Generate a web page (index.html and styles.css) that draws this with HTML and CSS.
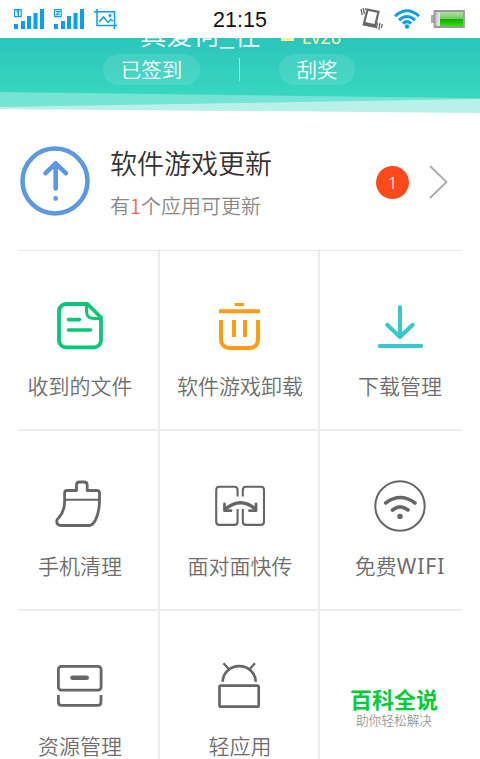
FILE: index.html
```html
<!DOCTYPE html>
<html lang="zh-CN">
<head>
<meta charset="utf-8">
<title>管理</title>
<link rel="stylesheet" href="styles.css">
</head>
<body>
<div class="status">
  <div class="status-left">
    <svg width="30" height="20" viewBox="0 0 30 20" fill="#0a9df0"><path d="M0 15h4v5H0zM7 12h4v8H7zM13 7h4v13h-4zM19.500 4h4v16h-4zM26 0h4v20h-4z"/><path d="M.6.6h6.600v7H.6z" fill="none" stroke="#0a9df0" stroke-width="1.200"/><path d="M2.500 2.500l1.800-.8V7" fill="none" stroke="#0a9df0" stroke-width="1.500"/></svg>
    <svg width="30" height="20" viewBox="0 0 30 20" fill="#0a9df0"><path d="M0 15h4v5H0zM7 12h4v8H7zM13 7h4v13h-4zM19.500 4h4v16h-4zM26 0h4v20h-4z"/><path d="M.6.6h6.600v7H.6z" fill="none" stroke="#0a9df0" stroke-width="1.200"/><path d="M2 2.500h3.600L2.200 5.800H6" fill="none" stroke="#0a9df0" stroke-width="1.100"/></svg>
    <svg width="24" height="20" viewBox="0 0 24 20" fill="none" stroke="#0a9df0" stroke-width="1.500"><path d="M0 2.700h20.500V20M3 0v16.500h20"/><path d="M5 13l4.500-5 4.500 5.500 3-3 2 1.500"/><circle cx="16" cy="6.500" r="1.500" fill="#0a9df0" stroke="none"/></svg>
  </div>
  <div class="clock">21:15</div>
  <div class="status-right">
    <svg width="23" height="24" viewBox="0 0 23 24" fill="none" stroke="#696969"><path d="M7.500 2.700L18.500 4.800l-3.600 15-11.200-2.400z" stroke-width="2.200"/><path d="M4 16.500l11.200 2.400" stroke-width="3.400"/><path d="M1 2l1.200 6M3.200 1l1.200 6M5.500 1L6 3M17.600 15.500l-1.300 6M20 16l-1.200 7M22.300 17l-1 4" stroke-width="1.300"/></svg>
    <svg class="net" width="26" height="20" viewBox="0 0 26 20" fill="none" stroke="#0a9df0" stroke-width="3"><path d="M1 7.200Q13-3.600 25 7.200M5 11.200q8-7.400 16 0M9 14.600q4-3.800 8 0" /><circle cx="13" cy="17.500" r="2.200" fill="#0a9df0" stroke="none"/></svg>
    <svg width="34" height="18" viewBox="0 0 34 18"><defs><linearGradient id="cell" x2="0" y2="1"><stop stop-color="#a9e3a0"/><stop offset=".5" stop-color="#6cc95e"/><stop offset=".52" stop-color="#0fae00"/><stop offset="1" stop-color="#2fe000"/></linearGradient><linearGradient id="shell" x2="1" y2="0"><stop stop-color="#bbb"/><stop offset=".2" stop-color="#eee"/></linearGradient></defs><path d="M0 5h3v8H0z" fill="#aaa"/><path d="M3.500 1h29.500v16H3.500z" fill="url(#shell)" stroke="#999" stroke-width="1.800"/><path d="M9 2h23v14H9z" fill="url(#cell)"/></svg>
  </div>
</div>

<header class="hero">
  <div class="user"><span class="name">真爱何_在</span><i class="crown"></i><span class="level">Lv26</span></div>
  <div class="actions"><span class="pill signed">已签到</span><i class="split"></i><span class="pill prize">刮奖</span></div>
  <svg class="wave" width="480" height="22" viewBox="0 0 480 22"><path d="M0 0L480 6.200V22H0z" fill="#76e3d3"/><path d="M0 15L480 7V22H0z" fill="#b9f1e8"/><path d="M0 17L480 21V22H0z" fill="#fff"/></svg>
</header>

<section class="update">
  <svg class="arrow" width="70" height="70" viewBox="0 0 70 70" fill="none" stroke="#5d99e2" stroke-width="4.600"><circle cx="35" cy="35" r="32.500"/><path d="M35.700 42.500V17.500M25.500 27.200L35.700 17.300l10.200 9.900" stroke-linecap="round" stroke-linejoin="round"/><circle cx="35.700" cy="52.500" r="2.400" fill="#5d99e2" stroke="none"/></svg>
  <div class="update-text">
    <h1>软件游戏更新</h1>
    <p>有<b>1</b>个应用可更新</p>
  </div>
  <span class="badge">1</span>
  <svg class="chevron" width="19" height="34" viewBox="0 0 19 34" fill="none" stroke="#aaa" stroke-width="1.800"><path d="M1 1l16.500 16L1 33"/></svg>
</section>

<main class="grid">
  <div class="cell">
    <svg class="icon" viewBox="0 0 60 60" stroke="#08c777" stroke-width="3.800"><path d="M37.500 8H16a7 7 0 0 0-7 7v29.300a7 7 0 0 0 7 7h28a7 7 0 0 0 7-7V21.500z" stroke-linejoin="round"/><path d="M36.500 8v7.500q0 7 8 7h6" stroke-width="3"/><path d="M18.500 23.600h11M18.500 34h22" stroke-linecap="round" stroke-width="3.600"/></svg>
    <span>收到的文件</span>
  </div>
  <div class="cell">
    <svg class="icon" viewBox="0 0 60 60" stroke="#ff9c14" stroke-width="4"><path d="M24.700 8.500H34" stroke-width="3"/><path d="M9 15.200h41M11 24v20a8 8 0 0 0 8 8h21a8 8 0 0 0 8-8V24M24 24v17M35 24v17"/></svg>
    <span>软件游戏卸载</span>
  </div>
  <div class="cell">
    <svg class="icon" viewBox="0 0 60 60" stroke="#35c9cc" stroke-width="4" stroke-linecap="round" stroke-linejoin="round"><path d="M30 11v29M17.200 28.800L30 41l12.700-12.200M9.700 50h41.600"/></svg>
    <span>下载管理</span>
  </div>
  <div class="cell">
    <svg class="icon" viewBox="0 0 60 60" stroke="#666" stroke-width="2.800" stroke-linejoin="round"><path d="M26.500 14.500V9q0-3 3-3H34q3.200 0 3.200 3v5.500H47q2.500 0 2.500 2.500v7q0 12-4 20-3 5.500-6 5.500H11.500q-4.800 0-4.800-4.500 0-1.500 2-3.200Q15 35 14.600 24v-7q0-2.500 2.500-2.500z"/><path d="M14.600 23.700h35" stroke-width="2"/></svg>
    <span>手机清理</span>
  </div>
  <div class="cell">
    <svg class="icon" viewBox="0 0 60 60" stroke="#666" stroke-width="2.100"><path d="M27.600 20.500V14q0-3.200-3.200-3.200H9.400Q6.200 10.800 6.200 14v31.700q0 3.200 3.200 3.200h15q3.200 0 3.200-3.200V33M32.800 20.500V14q0-3.200 3.200-3.200h14.800Q54 10.800 54 14v31.700q0 3.200-3.200 3.200H36q-3.200 0-3.200-3.200V33"/><path d="M15.500 33Q30.500 20.500 45.500 33" stroke-width="3.200"/><path d="M14.500 28v6.700h6.500M46 28v6.700h-6.500" stroke-width="2.800" stroke-linecap="round" stroke-linejoin="round"/></svg>
    <span>面对面快传</span>
  </div>
  <div class="cell">
    <svg class="icon" viewBox="0 0 60 60" stroke="#666" stroke-width="3.600" stroke-linecap="round"><circle cx="30" cy="30" r="24.700" stroke-width="2"/><path d="M15.700 27q14.500-11 29.300 0M22.500 34q7.500-6.200 15.500 0"/><circle cx="30" cy="40.400" r="2.700" fill="#666" stroke="none"/></svg>
    <span>免费<em>WIFI</em></span>
  </div>
  <div class="cell">
    <svg class="icon" viewBox="0 0 60 60" stroke="#666" stroke-width="2.800"><rect x="8.400" y="10.400" width="42.700" height="23.700" rx="3"/><path d="M8.400 39v7.200q0 3.200 3.200 3.200h36.200q3.200 0 3.200-3.200V39"/><path d="M22.500 21.700h14.200" stroke-width="4.600" stroke-linecap="round"/></svg>
    <span>资源管理</span>
  </div>
  <div class="cell">
    <svg class="icon" viewBox="0 0 60 60" stroke="#666" stroke-width="2.700"><path d="M12.700 25.700a16.500 15.600 0 0 1 33 0"/><path d="M13.500 7.300l5.500 6M45 7.300l-5.500 6" stroke-width="2.300"/><rect x="9.500" y="29.700" width="39.200" height="21" rx="1.500"/></svg>
    <span>轻应用</span>
  </div>
  <div class="cell promo">
    <strong>百科全说</strong>
    <small>助你轻松解决</small>
  </div>
</main>
</body>
</html>
```
FILE: styles.css
```css
* { box-sizing: border-box; }

body {
  margin: 0;
  height: 759px;
  overflow: hidden;
  background: #fff;
  color: #6e6e6e;
  font-family: "Noto Sans CJK SC", sans-serif;
  font-weight: 350;
}

svg { display: block; flex: none; }

.status {
  display: grid;
  grid-template-columns: 1fr auto 1fr;
  align-items: center;
  height: 38px;
  padding: 0 15px 0 14px;
}

.status-left, .status-right { display: flex; align-items: center; }
.status-left { gap: 10px; }
.status-right { justify-content: flex-end; }
.net { margin: 0 11px; }

.clock {
  padding: 2px 0 0 1px;
  color: #111;
  font: 400 21.500px/36px "Liberation Sans", sans-serif;
}

.hero {
  display: flex;
  flex-direction: column;
  height: 75px;
  overflow: hidden;
  background: linear-gradient(#2bc5bb, #36d6bf 54px);
  color: #fff;
}

.user, .actions { flex: none; }

.user {
  display: flex;
  align-items: flex-end;
  height: 36px;
  margin: -22px 0 2px 140px;
}

.name { font-size: 26.500px; line-height: 37px; white-space: nowrap; }
.crown { width: 13px; height: 12px; margin: 0 8px 11px 20px; background: #fff3a0; }
.level { color: #fff3a0; font: 400 18px/20px "Noto Sans", sans-serif; margin-bottom: 5px; }

.actions {
  display: flex;
  align-items: center;
  height: 31px;
  margin-left: 103px;
}

.pill {
  height: 31px;
  border-radius: 16px;
  background: rgba(255, 255, 255, .1);
  font-size: 20.500px;
  line-height: 30px;
  text-align: center;
}
.signed { width: 97px; }
.prize { width: 76px; }
.split { width: 1px; height: 23px; margin: 0 39px; background: rgba(255, 255, 255, .55); }
.wave { margin-top: 7px; }

.update {
  display: flex;
  align-items: center;
  height: 138px;
  margin: 0 18px;
  padding: 0 14px 0 2px;
  border-bottom: 1px solid #e7e7e7;
}

.arrow { margin-bottom: 2px; }
.update-text { flex: 1; margin-left: 20px; }
h1 { margin: 0; color: #333; font-size: 27px; font-weight: 350; line-height: 40px; }
p { margin: 8px 0 0; color: #888; font-size: 20px; line-height: 30px; }
p b { color: #ff6846; font-weight: 350; }

.badge {
  width: 33px;
  height: 33px;
  margin-top: 1px;
  border-radius: 50%;
  background: #ff481c;
  color: #fff;
  font: 300 17px/34px "Noto Sans", sans-serif;
  text-align: center;
}
.chevron { margin-left: 20px; }

.grid {
  display: grid;
  grid-template-columns: 142px 160px 142px;
  grid-auto-rows: 180px;
  margin: 0 18px;
}

.cell {
  display: flex;
  flex-direction: column;
  align-items: center;
  padding-top: 45px;
  border-bottom: 2px solid #ececec;
  font-size: 21px;
  line-height: 30px;
  white-space: nowrap;
}
.cell:nth-child(3n+1) { padding-right: 16px; border-right: 2px solid #ececec; }
.cell:nth-child(3n+2) { padding-left: 2px; border-right: 2px solid #ececec; }
.cell:nth-child(3n) { padding-left: 18px; }

.icon { width: 60px; height: 60px; margin-bottom: 14px; fill: none; }
.cell em { font: 400 21px/30px "Noto Sans", sans-serif; letter-spacing: 1px; }

.cell.promo { padding-top: 72px; padding-right: 12px; }
.promo strong { color: #00cc35; font-size: 22px; font-weight: 700; line-height: 30px; }
.promo small { color: #999; font-size: 12.700px; line-height: 14px; }
```
